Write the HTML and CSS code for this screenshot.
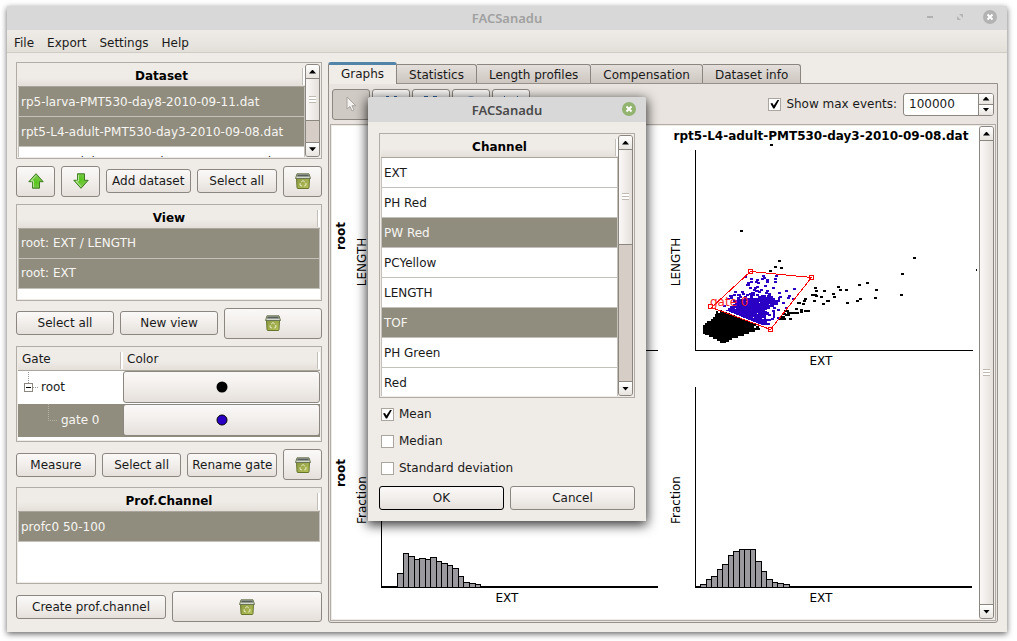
FILE: index.html
```html
<!DOCTYPE html>
<html lang="en">
<head>
<meta charset="utf-8">
<title>FACSanadu</title>
<link rel="stylesheet" href="styles.css">
</head>
<body>
<svg class="defs" width="0" height="0" aria-hidden="true">
  <defs>
    <linearGradient id="bin-body" x1="0" x2="1" y1="0" y2="1">
      <stop offset="0" stop-color="#8a9740"/><stop offset="1" stop-color="#b9c45c"/>
    </linearGradient>
    <radialGradient id="arrow-fill" cx=".5" cy=".6" r=".6">
      <stop offset="0" stop-color="#55c81a"/><stop offset="1" stop-color="#8cc85c"/>
    </radialGradient>
    <symbol id="bin" viewBox="0 0 16 16">
      <path d="M1.500 5h13l-.5 9.500a1 1 0 0 1-1 1H3a1 1 0 0 1-1-1z" fill="url(#bin-body)" stroke="#66752c"/>
      <path d="M2 .8h12l1.500 4.700H.5z" fill="#d3d8cf" stroke="#6b7750"/>
      <path d="M2.500 1.500h11l.5 2H2z" fill="#59605a"/>
      <path d="M6.200 9l1.800-1.500L9.800 9M10.800 10l.2 2-1.800 1M7 13l-2-.8.2-2" fill="none" stroke="#e6ecc4"/>
    </symbol>
    <symbol id="arrow" viewBox="0 0 16 16">
      <path d="M8 .7l7.200 8H11.500v6.500h-7V8.700H.8z" fill="url(#arrow-fill)" stroke="#3d7a22"/>
      <path d="M8 2.400L3 7.900h2.400v6.300" fill="none" stroke="#c4ecaa" stroke-width=".9"/>
    </symbol>
  </defs>
</svg>

<div class="window">
  <header class="titlebar">
    <span>FACSanadu</span>
    <div class="window-controls">
      <button aria-label="Minimize"><svg width="14" height="14" viewBox="0 0 14 14"><path d="M4 7h6" stroke="#b0b0b0" stroke-width="2"/></svg></button>
      <button aria-label="Maximize"><svg width="14" height="14" viewBox="0 0 14 14"><path d="M6 4h4v4zM4 6v4h4z" fill="#b5b5b5"/></svg></button>
      <button aria-label="Close"><svg width="14" height="14" viewBox="0 0 14 14"><circle cx="7" cy="7" r="7" fill="#b3b3b3"/><path d="M4.500 4.500l5 5m0-5l-5 5" stroke="#fff" stroke-width="2"/></svg></button>
    </div>
  </header>
  <nav class="menubar">
    <button>File</button><button>Export</button><button>Settings</button><button>Help</button>
  </nav>

  <main class="workspace">
    <aside class="sidebar">
      <div class="frame">
        <div class="viewport">
          <table class="list">
            <thead><tr><th>Dataset</th></tr></thead>
            <tbody>
              <tr class="selected"><td>rp5-larva-PMT530-day8-2010-09-11.dat</td></tr>
              <tr class="selected"><td>rpt5-L4-adult-PMT530-day3-2010-09-08.dat</td></tr>
              <tr><td>rpt5-L4-adult-PMT530-day4-2010-09-08.dat</td></tr>
            </tbody>
          </table>
        </div>
        <div class="scrollbar">
          <button class="up" aria-label="Scroll up"></button>
          <div class="track"><div class="thumb thumb-half"></div></div>
          <button class="down" aria-label="Scroll down"></button>
        </div>
      </div>
      <div class="actions">
        <button class="btn tall square" aria-label="Move up"><svg width="16" height="16"><use href="#arrow"/></svg></button>
        <button class="btn tall square" aria-label="Move down"><svg class="flip" width="16" height="16"><use href="#arrow"/></svg></button>
        <button class="btn add">Add dataset</button>
        <button class="btn wide">Select all</button>
        <button class="btn tall square" aria-label="Remove dataset"><svg width="16" height="16"><use href="#bin"/></svg></button>
      </div>

      <div class="frame">
        <div class="viewport">
          <table class="list">
            <thead><tr><th>View</th></tr></thead>
            <tbody>
              <tr class="selected"><td>root: EXT / LENGTH</td></tr>
              <tr class="selected"><td>root: EXT</td></tr>
            </tbody>
          </table>
        </div>
      </div>
      <div class="actions even">
        <button class="btn">Select all</button>
        <button class="btn">New view</button>
        <button class="btn tall" aria-label="Remove view"><svg width="16" height="16"><use href="#bin"/></svg></button>
      </div>

      <div class="frame">
        <div class="viewport">
          <table class="list gates">
            <thead><tr><th class="gate-col">Gate</th><th>Color</th></tr></thead>
            <tbody>
              <tr>
                <td><div class="node"><svg width="20" height="32" viewBox="0 0 20 32"><path d="M10.500 1v11M15 16.500h5" stroke="#999" stroke-dasharray="1 1"/><rect x="6.500" y="12.500" width="8" height="8" fill="#fff" stroke="#8c8880"/><path d="M8 16.500h5" stroke="#000"/></svg>root</div></td>
                <td><button class="btn swatch" aria-label="Color of root"><svg width="12" height="12"><circle cx="6" cy="6" r="5.500" fill="#000"/></svg></button></td>
              </tr>
              <tr class="selected">
                <td><div class="node"><svg width="40" height="32" viewBox="0 0 40 32"><path d="M30.500 0v16.500H39" fill="none" stroke="#b5b1a5" stroke-dasharray="1 1"/></svg>gate 0</div></td>
                <td><button class="btn swatch" aria-label="Color of gate 0"><svg width="12" height="12"><circle cx="6" cy="6" r="5" fill="#2a00c4" stroke="#000"/></svg></button></td>
              </tr>
            </tbody>
          </table>
        </div>
      </div>
      <div class="actions">
        <button class="btn wide">Measure</button>
        <button class="btn wide">Select all</button>
        <button class="btn rename">Rename gate</button>
        <button class="btn tall square" aria-label="Remove gate"><svg width="16" height="16"><use href="#bin"/></svg></button>
      </div>

      <div class="frame">
        <div class="viewport">
          <table class="list">
            <thead><tr><th>Prof.Channel</th></tr></thead>
            <tbody><tr class="selected"><td>profc0 50-100</td></tr></tbody>
          </table>
        </div>
      </div>
      <div class="actions even">
        <button class="btn">Create prof.channel</button>
        <button class="btn tall" aria-label="Remove channel"><svg width="16" height="16"><use href="#bin"/></svg></button>
      </div>
    </aside>

    <section class="tabs">
      <div class="tablist" role="tablist">
        <button role="tab" class="tab active" aria-selected="true">Graphs</button>
        <button role="tab" class="tab">Statistics</button>
        <button role="tab" class="tab">Length profiles</button>
        <button role="tab" class="tab">Compensation</button>
        <button role="tab" class="tab">Dataset info</button>
      </div>
      <div class="pane">
        <div class="toolbar">
          <div class="tools">
            <button class="btn tall tool pressed" aria-label="Select"><svg width="16" height="16" viewBox="0 0 16 16"><path d="M4 1v12l3-2.500 2 4.500 2-1-2-4.300h3.800z" fill="#f4f2f0" stroke="#a8a49e"/></svg></button>
            <button class="btn tall tool" aria-label="Polygon gate"><svg width="16" height="16" viewBox="0 0 16 16"><path d="M3 .5h3M11 .5h3M2 2l2 11 7 2 3-12" fill="none" stroke="#3465a4"/></svg></button>
            <button class="btn tall tool" aria-label="Rectangle gate"><svg width="16" height="16" viewBox="0 0 16 16"><path d="M1 .5h4M10 .5h4M1.500 2v13h12V2" fill="none" stroke="#3465a4"/></svg></button>
            <button class="btn tall tool" aria-label="Ellipse gate"><svg width="16" height="16" viewBox="0 0 16 16"><circle cx="8" cy="7" r="6.500" fill="none" stroke="#8aa3c4"/></svg></button>
            <button class="btn tall tool" aria-label="Range gate"><svg width="16" height="16" viewBox="0 0 16 16"><path d="M1.500 0v15M14.500 0v15M2 8h12" fill="none" stroke="#3465a4"/></svg></button>
          </div>
          <label class="check"><input type="checkbox" checked>Show max events:</label>
          <div class="spin">
            <input type="text" value="100000" aria-label="Max events">
            <div class="steps"><button class="up" aria-label="Increase"></button><button class="down" aria-label="Decrease"></button></div>
          </div>
        </div>
        <div class="frame">
          <div class="viewport">
            <svg class="plots" width="646" height="492" viewBox="0 0 646 492">
              <text class="bold" x="489" y="14" text-anchor="middle">rpt5-L4-adult-PMT530-day3-2010-09-08.dat</text>
              <text class="bold" transform="translate(13 110) rotate(-90)" text-anchor="middle">root</text>
              <text class="bold" transform="translate(13 347) rotate(-90)" text-anchor="middle">root</text>

              <g transform="translate(49 24)">
                <path class="axis" d="M.5 0v200.500H277"/>
                <text transform="translate(-15 112) rotate(-90)" text-anchor="middle">LENGTH</text>
                <text x="126" y="215" text-anchor="middle">EXT</text>
              </g>

              <g transform="translate(363 24)">
                <path class="axis" d="M.5 0v200.500H278"/>
                <text transform="translate(-15 112) rotate(-90)" text-anchor="middle">LENGTH</text>
                <text x="126" y="215" text-anchor="middle">EXT</text>
                <path class="mass-dark" d="M8 175h2v-2h2v-2h4v-2h2v-2h2v-3h1v-3h2v2h2v-3h2v2h4l30 12v2h-2v2h4v2h-3v2h-6v2h-5v2h-6v2h-6v2h-3v2h-3v1h-6v-2h-3v-2h-4v-2h-4v-2h-4v-1H8z"/>
                <path class="mass-gate" d="M30 160h3v-2h2v-2h3v-2h2v-2h-2v-2h4v-3h3v2h4v-3h3v2h3v-3h3v3h5v-2h3v-1h3v2h3v-2h4v3h4v2h3v-3h2v5h-2v3h-4v2h-4v2h-3v3h2v3h-3v4h3v2h-2v4h-5z"/>
                <path class="dots dark" d="M75-5h3M45 81h3M83 111h3M79 117h3M85 118h3M74 121h3M218 108h3M206 124h3M281 120h1M171 133h3M163 135h3M142 137h3M144 140h3M150 140h3M180 140h3M119 138h3M120 141h3M128 141h3M137 144h3M138 147h3M116 145h6M120 146h3M125 147h3M118 151h3M127 154h3M131 151h4M151 153h3M161 151h3M164 149h3M179 148h3M205 145h3M109 149h3M108 151h3M102 153h4M107 154h3M100 159h3M105 160h3M105 162h3M109 161h6M89 161h5M92 163h12M88 164h3M90 165h5M85 167h5M87 169h4M94 169h3M84 169h3M62 179h3M61 177h3M50 182h3M46 184h3"/>
                <path class="dots gate" d="M49 127h3M55 129h3M55 132h3M52 133h3M51 135h4M61 130h3M60 132h3M62 133h3M67 126h3M66 129h3M68 128h3M71 130h3M71 132h3M69 136h3M80 126h3M79 129h3M79 132h3M77 138h3M98 139h3M90 141h3M59 138h3M60 141h4M58 140h3M61 137h3M54 138h3M56 143h4M63 142h3M65 140h3M71 141h3M70 143h3M73 144h3M46 142h3M47 144h3M39 142h3M38 145h3M34 146h4M42 145h4M44 147h3M51 145h3M54 144h3M56 145h4M61 145h3M68 146h3M75 147h3M83 143h3M84 147h3M93 146h3M97 149h3M92 148h3M32 149h3M28 156h3M90 158h3M87 153h3M35 148h3M77 161h3M78 163h2M78 165h2M78 167h2M76 169h3M73 170h3M73 165h3M82 168h3M82 160h3M78 158h3M72 174h3M67 173h3"/>
                <path class="dots hole" d="M40 158h1M64 152h1M70 160h2M62 163h1M67 168h2M58 167h1M74 154h1M51 151h1"/>
                <path class="outline" d="M55.500 121.500l61 6-41 52-59-22zM53.500 119.500h4v4h-4zM114.500 125.500h4v4h-4zM73.500 177.500h4v4h-4zM13.500 154.500h4v4h-4z"/>
                <text class="gate-name" x="15" y="156">gate 0</text>
              </g>

              <g transform="translate(49 261)">
                <path class="axis" d="M.5 0v200H277M0 199.500h277"/>
                <text transform="translate(-15 113) rotate(-90)" text-anchor="middle">Fraction</text>
                <text x="126" y="215" text-anchor="middle">EXT</text>
                <path class="bars" d="M16.500 199.500v-13h6v13M22.500 199.500v-33h5v33M27.500 199.500v-30h6v30M33.500 199.500v-27h5v27M38.500 199.500v-28h6v28M44.500 199.500v-27h5v27M49.500 199.500v-29h6v29M55.500 199.500v-25h5v25M60.500 199.500v-23h6v23M66.500 199.500v-21h5v21M71.500 199.500v-18h6v18M77.500 199.500v-10h5v10M82.500 199.500v-4h6v4M88.500 199.500v-3h6v3M94.500 199.500v-2h5v2"/>
              </g>

              <g transform="translate(363 261)">
                <path class="axis" d="M.5 0v200H277M0 199.500h277"/>
                <text transform="translate(-15 113) rotate(-90)" text-anchor="middle">Fraction</text>
                <text x="126" y="215" text-anchor="middle">EXT</text>
                <path class="bars" d="M5.500 199.500v-2h6v2M11.500 199.500v-7h5v7M16.500 199.500v-10h6v10M22.500 199.500v-17h5v17M27.500 199.500v-22h6v22M33.500 199.500v-31h5v31M38.500 199.500v-35h6v35M44.500 199.500v-37h5v37M49.500 199.500v-37h6v37M55.500 199.500v-37h5v37M60.500 199.500v-25h6v25M66.500 199.500v-15h5v15M71.500 199.500v-7h6v7M77.500 199.500v-4h5v4M82.500 199.500v-3h6v3M88.500 199.500v-2h6v2"/>
              </g>
            </svg>
          </div>
          <div class="scrollbar">
            <button class="up" aria-label="Scroll up"></button>
            <div class="track"><div class="thumb"></div></div>
            <button class="down" aria-label="Scroll down"></button>
          </div>
        </div>
      </div>
    </section>
  </main>

  <div class="dialog" role="dialog" aria-label="FACSanadu">
    <header class="titlebar">
      <span>FACSanadu</span>
      <div class="window-controls">
        <button aria-label="Close dialog"><svg width="14" height="14" viewBox="0 0 14 14"><circle cx="7" cy="7" r="7" fill="#93b370"/><path d="M4.500 4.500l5 5m0-5l-5 5" stroke="#fff" stroke-width="2"/></svg></button>
      </div>
    </header>
    <div class="dialog-body">
      <div class="frame channel-frame">
        <div class="viewport">
          <table class="list">
            <thead><tr><th>Channel</th></tr></thead>
            <tbody>
              <tr><td>EXT</td></tr>
              <tr><td>PH Red</td></tr>
              <tr class="selected"><td>PW Red</td></tr>
              <tr><td>PCYellow</td></tr>
              <tr><td>LENGTH</td></tr>
              <tr class="selected"><td>TOF</td></tr>
              <tr><td>PH Green</td></tr>
              <tr><td>Red</td></tr>
            </tbody>
          </table>
        </div>
        <div class="scrollbar">
          <button class="up" aria-label="Scroll up"></button>
          <div class="track"><div class="thumb thumb-channels"></div></div>
          <button class="down" aria-label="Scroll down"></button>
        </div>
      </div>
      <div class="options">
        <label class="check"><input type="checkbox" checked>Mean</label>
        <label class="check"><input type="checkbox">Median</label>
        <label class="check"><input type="checkbox">Standard deviation</label>
      </div>
      <div class="actions even">
        <button class="btn default">OK</button>
        <button class="btn">Cancel</button>
      </div>
    </div>
  </div>
</div>
</body>
</html>
```

FILE: styles.css
```css
* { box-sizing: border-box; }

html { height: 100%; }

body {
  display: flex;
  height: 100%;
  margin: 0;
  padding: 6px 10px 9px 7px;
  background: #fff;
  color: #1a1a1a;
  font: 12px/16px "DejaVu Sans", Verdana, sans-serif;
}

button, input { font: inherit; color: inherit; margin: 0; }
button { padding: 0; border: 0; background: none; }
svg { display: block; }
.defs { position: absolute; }

/* Windows */
.window {
  position: relative;
  display: flex;
  flex: 1;
  flex-direction: column;
  min-width: 0;
  background: #efebe7;
  box-shadow: 0 2px 6px rgba(0, 0, 0, .6);
}

.titlebar {
  position: relative;
  display: flex;
  flex: none;
  align-items: center;
  justify-content: center;
  height: 24px;
  background: #d8d8d8;
  color: #a0a0a0;
  font: 600 13px/24px "Noto Sans", sans-serif;
}

.window-controls {
  position: absolute;
  top: 4px;
  right: 10px;
  display: flex;
  gap: 16px;
}

.menubar {
  display: flex;
  flex: none;
  gap: 13px;
  height: 23px;
  padding: 3px 7px 0;
  border-bottom: 1px solid #cfcbc5;
  background: linear-gradient(#efebe7, #e3dfd9);
}

.workspace {
  display: flex;
  flex: 1;
  gap: 6px;
  min-height: 0;
  padding: 9px;
}

.sidebar {
  display: flex;
  flex: none;
  flex-direction: column;
  gap: 7px;
  width: 306px;
  padding-bottom: 1px;
}

/* Framed lists */
.frame {
  display: flex;
  flex: 1 1 0;
  min-height: 0;
  padding: 1px;
  border: 1px solid #b1ada6;
  background: #efebe7;
}

.viewport {
  flex: 1;
  min-width: 0;
  overflow: hidden;
  background: #fff;
}

.list {
  width: 100%;
  border-spacing: 0;
  border-collapse: separate;
}

.list th {
  position: relative;
  height: 23px;
  padding: 2px 0 0;
  border-bottom: 1px solid #a9a59d;
  background: linear-gradient(#efebe7 60%, #e4dfd8);
  color: #000;
}

.list th::after {
  content: "";
  position: absolute;
  top: 4px;
  right: 0;
  width: 2px;
  height: 17px;
  border-left: 1px solid #c3bfb8;
  background: #fff;
}

.list td {
  height: 30px;
  padding: 0 2px;
  border: solid #c4c0ba;
  border-width: 0 1px 1px;
}

.selected td { background: #918d7e; color: #f6f5f2; }

.gates th { padding: 0 0 0 4px; font-weight: normal; text-align: left; color: #1a1a1a; }
.gates .gate-col { width: 105px; }
.gates td { height: 33px; padding: 0; border: 0; }
.node { display: flex; align-items: center; gap: 3px; }

/* Buttons */
.actions { display: flex; flex: none; align-items: center; gap: 6px; }
.even .btn { flex: 1 1 0; }

.btn {
  display: flex;
  align-items: center;
  justify-content: center;
  height: 24px;
  border: 1px solid #8b8680;
  border-radius: 3px;
  background: linear-gradient(#fbf9f8, #f1eeeb 50%, #e6e0db);
  white-space: nowrap;
}

.tall { height: 31px; }
.square { width: 39px; }
.wide { flex: 1 1 80px; }
.add { flex: 1 1 84px; }
.rename { flex: 1 1 90px; }
.swatch { width: 100%; height: 32px; }
.default { border-color: #000; }
.flip { transform: scaleY(-1); }

/* Scroll bars */
.scrollbar {
  display: flex;
  flex: none;
  flex-direction: column;
  width: 15px;
  border: 1px solid #8b8680;
  border-radius: 3px;
  background: #d6cdc6;
}

.up, .down {
  display: flex;
  align-items: center;
  justify-content: center;
  height: 14px;
  background: linear-gradient(#fff, #e8e4df);
}

.up { border-bottom: 1px solid #8b8680; border-radius: 2px 2px 0 0; }
.down { border-top: 1px solid #8b8680; border-radius: 0 0 2px 2px; }

.up::before, .down::before {
  content: "";
  width: 7px;
  height: 4px;
  background: #000;
  clip-path: polygon(50% 0, 100% 100%, 0 100%);
}

.down::before { clip-path: polygon(0 0, 100% 0, 50% 100%); }

.track { flex: 1; min-height: 0; }

.thumb {
  display: flex;
  align-items: center;
  justify-content: center;
  height: 100%;
  background: linear-gradient(90deg, #faf8f7, #e5e0db);
}

.thumb::before {
  content: "";
  width: 7px;
  height: 7px;
  background: repeating-linear-gradient(#bfb9b2 0 1px, #fff 1px 3px);
}

.thumb-half { height: 67%; border-bottom: 1px solid #8b8680; }
.thumb-channels { height: 41%; border-bottom: 1px solid #8b8680; }

/* Tabs */
.tabs { display: flex; flex: 1; flex-direction: column; min-width: 0; }
.tablist { display: flex; flex: none; align-items: flex-end; height: 21px; }

.tab {
  height: 19px;
  padding: 2px 12px 0;
  border: solid #8b8680;
  border-width: 1px 1px 0 0;
  border-radius: 0 3px 0 0;
  background: linear-gradient(#e4dfdb, #cdc6c0);
}

.tab.active {
  position: relative;
  height: 22px;
  margin-bottom: -1px;
  padding: 0 12px 1px;
  border-width: 3px 1px 0;
  border-top-color: #5283a8;
  border-radius: 3px 3px 0 0;
  background: #f0ece8;
}

.pane {
  display: flex;
  flex: 1;
  flex-direction: column;
  min-height: 0;
  padding: 0 1px 1px;
  border: 1px solid #96918a;
  border-radius: 0 0 3px 3px;
  background: #e9e4df;
}

.toolbar {
  display: flex;
  flex: none;
  align-items: center;
  gap: 6px;
  height: 40px;
  padding: 0 2px;
}

.tools { display: flex; flex: 1; gap: 2px; }
.tool { width: 38px; }
.pressed { background: #d0cac4; }

.check { display: flex; align-items: center; gap: 5px; }

.check input {
  appearance: none;
  width: 13px;
  height: 13px;
  border: 1px solid #aaa69f;
  background: #fff;
}

.check input:checked::before {
  content: "";
  display: block;
  width: 9px;
  height: 9px;
  margin: 1px;
  background: #000;
  clip-path: polygon(0 45%, 22% 38%, 38% 66%, 82% 0, 100% 4%, 46% 100%, 32% 100%);
}

.spin {
  display: flex;
  width: 91px;
  height: 23px;
  overflow: hidden;
  border: 1px solid #8b8680;
  border-radius: 3px;
  background: #fff;
}

.spin input { flex: 1; width: 0; padding: 0 5px; border: 0; background: none; }
.steps { display: flex; flex: none; flex-direction: column; width: 15px; border-left: 1px solid #8b8680; }
.steps button { flex: 1; height: auto; border-radius: 0; }
.steps .down { border-top: 0; }

/* Plots */
.plots text { fill: #000; font: 12px "DejaVu Sans", sans-serif; }
.plots .bold { font-weight: bold; }
.plots .gate-name { fill: #ff2020; }
.plots path { shape-rendering: crispEdges; }
.axis { fill: none; stroke: #000; }
.dots { fill: none; stroke-width: 2; }
.dark { stroke: #000; }
.gate { stroke: #2a00c4; }
.hole { stroke: #fff; stroke-width: 1; }
.mass-dark { fill: #000; }
.mass-gate { fill: #2a00c4; }
.outline { fill: none; stroke: #f00; }
.bars { fill: #9b999d; stroke: #000; }

/* Dialog */
.dialog {
  position: absolute;
  top: 91px;
  left: 50%;
  width: 278px;
  margin-left: -139px;
  border-radius: 3px 3px 0 0;
  background: #efebe7;
  box-shadow: 0 3px 12px 1px rgba(0, 0, 0, .8);
}

.dialog .titlebar { height: 25px; border-radius: 3px 3px 0 0; color: #4a4a4a; }
.dialog .window-controls { top: 5px; }
.dialog-body { padding: 11px; }
.channel-frame { height: 265px; }
.options { display: flex; flex-direction: column; gap: 11px; padding: 8px 2px 10px; }
```
